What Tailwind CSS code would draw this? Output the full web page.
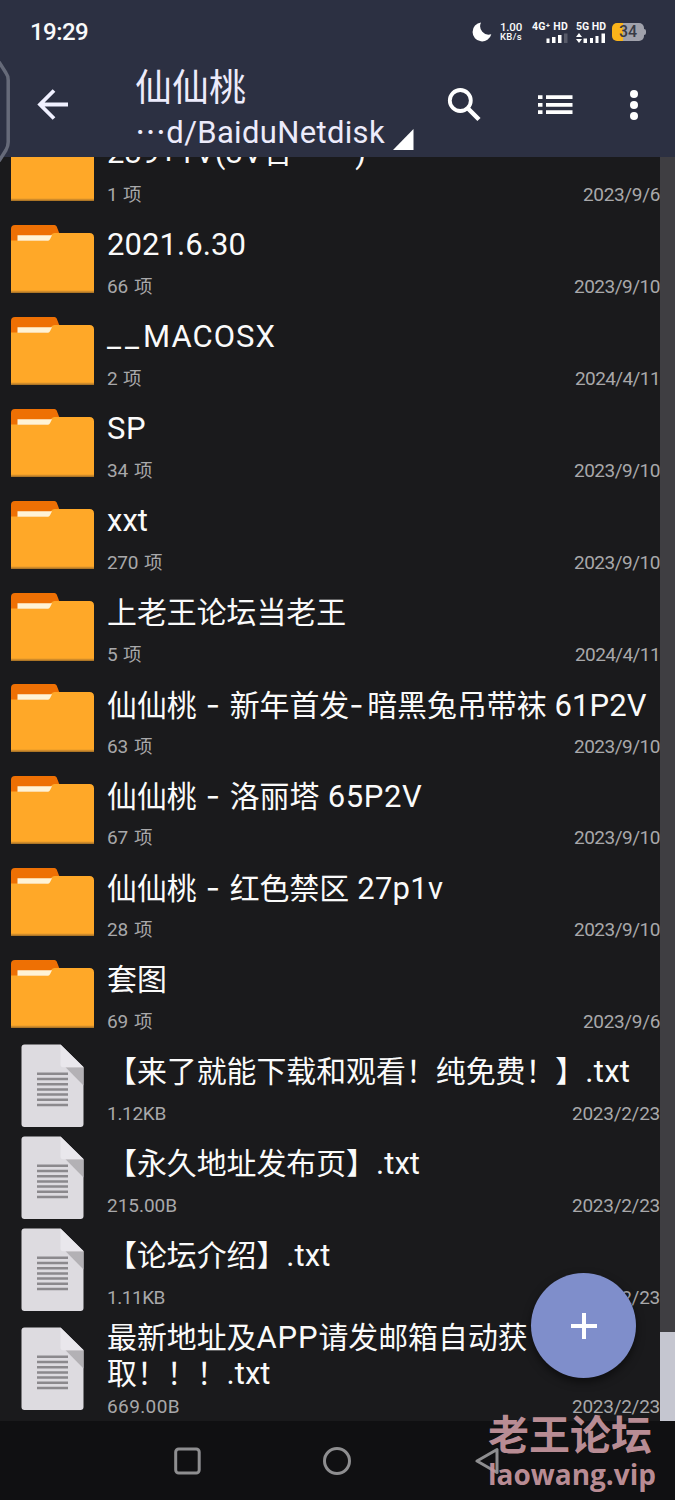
<!DOCTYPE html>
<html lang="zh-CN">
<head>
<meta charset="utf-8">
<title>文件管理器</title>
<script src="https://cdn.jsdelivr.net/npm/@tailwindcss/browser@4"></script>
</head>
<body class="bg-[#1a1a1c]">
<svg class="hidden">
  <symbol id="folder" viewBox="0 0 84 84">
    <path d="M0 32V12Q0 8 4 8H43.500Q45 8 45.700 9.500L49 18V32Z" fill="#ee7004"/>
    <path d="M0 23.500H34Q37.500 23.500 39 20.500L40.500 17.500Q41.500 16 43.500 16H78.500Q83 16 83 20.500V75.500H0Z" fill="#ffa828"/>
    <path d="M6.500 18.300H41L39 22.200Q38.200 23.800 36.500 23.800H6.500Z" fill="#fff3d6"/>
    <path d="M0 73.800H83V75.500H0Z" fill="#cf8b2b"/>
  </symbol>
  <symbol id="doc" viewBox="0 0 84 84">
    <path d="M10.500 3.500Q10.500 .5 13.500 .5H49.500L72.500 23V80Q72.500 83 69.500 83H13.500Q10.500 83 10.500 80Z" fill="#dddbe0"/>
    <path d="M54.500 23.200H72.500V41.500Z" fill="#b3b1b5"/>
    <path d="M49.500 .5L72.500 23.200H52Q49.500 23.200 49.500 20.500Z" fill="#e9e7ec"/>
    <path d="M26 29.800H57M26 35H57M26 40.200H57M26 45.400H57M26 50.600H57M26 55.800H57M26 61H57" stroke="#8b898d" stroke-width="2.500"/>
  </symbol>
</svg>
<div class="relative flex h-[1500px] w-[675px] flex-col overflow-hidden bg-[#1a1a1c] font-['Roboto','Noto_Sans_CJK_SC',sans-serif] text-[#fafafa]">
  <header class="relative flex h-[157px] shrink-0 flex-col bg-[#2c3042]">
    <div class="flex h-[64px] items-center pl-[30px] pr-[29px]">
      <span class="grow text-[24px] font-medium leading-none"><span class="fit whitespace-nowrap" data-w="58">19:29</span></span>
      <svg class="h-[20px] w-[20px]" viewBox="0 0 20 20"><path d="M9 .5A9.500 9.500 0 1 0 19.300 12.200A8.500 8.500 0 0 1 9 .5Z" fill="#fff"/></svg>
      <div class="ml-[7px] flex w-[24px] flex-col items-center text-[11.500px] font-medium leading-[10.500px]">
        <span class="fit whitespace-nowrap" data-w="22">1.00</span><span class="fit whitespace-nowrap text-[9.500px]" data-w="22">KB/s</span>
      </div>
      <div class="ml-[9px] flex w-[36px] flex-col items-end gap-[2px] text-[10.500px] font-bold leading-[9px]">
        <span class="fit whitespace-nowrap" data-w="36">4G⁺ HD</span>
        <svg class="h-[10px] w-[23px]" viewBox="0 0 23 10"><path d="M1.500 5.500h3V10h-3zM7 4h3.500v6H7zM13 2h3.500v8H13z" fill="#fff"/><path d="M19 .5h3.500V10H19z" fill="#585b69"/></svg>
      </div>
      <div class="ml-[7px] flex w-[31px] flex-col items-end gap-[2px] text-[10.500px] font-bold leading-[9px]">
        <span class="fit whitespace-nowrap" data-w="30">5G HD</span>
        <svg class="h-[10px] w-[30px]" viewBox="0 0 30 10"><path d="M3 0L6 4H0ZM3 10L0 6H6ZM7.500 5.500h3.500V10H7.500zM14 5h3v5h-3zM19.500 3h3v7h-3zM25.500 .5H29V10h-3.500z" fill="#fff"/></svg>
      </div>
      <div class="ml-[6px] flex items-center">
        <div class="flex h-[18px] w-[32px] items-center justify-center rounded-[5px] bg-linear-to-r from-[#fbb41a] from-35% to-[#a0a1ab] to-35% text-[16px] font-medium leading-none text-[#383a44]">34</div>
        <div class="h-[6px] w-[2px] rounded-r-sm bg-[#a0a1ab]"></div>
      </div>
    </div>
    <div class="flex h-[93px]">
      <svg class="ml-[36px] mt-[25px] h-[31px] w-[33px] shrink-0" viewBox="0 0 33 31" fill="none" stroke="#f0f0ff" stroke-width="3.800"><path d="M18 1.500L4 15.500L18 29.500M3.500 15.500H32"/></svg>
      <div class="ml-[66px] flex w-[281px] shrink-0 flex-col text-[#ecebfb]">
        <div class="mt-[4px] h-[42px] text-[37px] leading-[42px] whitespace-nowrap">仙仙桃</div>
        <div class="flex h-[46px] text-[31px] leading-[46px]"><span class="fit whitespace-nowrap" data-w="250">⋯d/BaiduNetdisk</span>
          <svg class="ml-[8px] mt-[19px] -mb-[4px] h-[21px] w-[21px] shrink-0" viewBox="0 0 21 21"><path d="M0 21L20.500 0V21Z" fill="#fff"/></svg>
        </div>
      </div>
      <svg class="ml-[31px] mt-[24px] h-[34px] w-[34px] shrink-0" viewBox="0 0 34 34" fill="none" stroke="#fff"><circle cx="13.300" cy="12.500" r="10.500" stroke-width="3.800"/><path d="M20.500 20L32 31.500" stroke-width="4.500"/></svg>
      <svg class="ml-[57px] mt-[31px] h-[20px] w-[35px] shrink-0" viewBox="0 0 35 20" stroke="#fff" stroke-width="3.700"><path d="M0 2.200H4.500M8 2.200H34.500M0 9.800H4.500M8 9.800H34.500M0 17.200H4.500M8 17.200H34.500"/></svg>
      <svg class="ml-[56px] mt-[25px] h-[32px] w-[10px] shrink-0" viewBox="0 0 10 32" fill="#fff"><circle cx="5" cy="5" r="4"/><circle cx="5" cy="16" r="4"/><circle cx="5" cy="27" r="4"/></svg>
    </div>
  </header>
  <div class="flex h-[1264px] shrink-0 overflow-hidden">
    <main id="list" class="-mt-[35.800px] w-[660px] shrink-0"></main>
    <div class="flex w-[15px] flex-col justify-end bg-[#3f3e42]"><div class="h-[89px] bg-[#c5c6d0]"></div></div>
  </div>
  <nav class="flex h-[79px] shrink-0 items-center bg-[#101012]">
    <svg class="ml-[174px] h-[28px] w-[27px]" viewBox="0 0 27 28" fill="none" stroke="#8e8e90" stroke-width="3"><rect x="1.700" y="2" width="23.500" height="24" rx="3"/></svg>
    <svg class="ml-[122px] h-[28px] w-[28px]" viewBox="0 0 28 28" fill="none" stroke="#8e8e90" stroke-width="3"><circle cx="14" cy="14" r="12.500"/></svg>
    <svg class="ml-[124px] h-[28px] w-[25px]" viewBox="0 0 25 28" fill="none" stroke="#8e8e90" stroke-width="3" stroke-linejoin="round"><path d="M2 14L22 2.500V25.500Z"/></svg>
  </nav>
  <svg class="absolute left-0 top-[60px] h-[106px] w-[12px]" viewBox="0 0 12 106" fill="none" stroke="#666a79" stroke-width="3.500"><path d="M-1 2L6 13Q8.200 16 8.200 20V82Q8.200 86 6 90L-1 101"/></svg>
  <div class="absolute left-[531px] top-[1273px] flex h-[105px] w-[105px] items-center justify-center rounded-full bg-[#7f8ecb] shadow-[0_4px_8px_rgba(0,0,0,0.5)]">
    <svg class="h-[26px] w-[26px]" viewBox="0 0 26 26" stroke="#fff" stroke-width="4"><path d="M13 0V26M0 13H26"/></svg>
  </div>
  <div class="absolute left-[488px] top-[1407px] flex flex-col font-bold text-[#c4959d]/95">
    <span class="h-[50px] font-['Noto_Sans_CJK_SC',sans-serif] text-[41px] leading-[50px] font-bold whitespace-nowrap">老王论坛</span>
    <span class="h-[34px] font-['Open_Sans',sans-serif] text-[28px] leading-[34px]"><span class="fit whitespace-nowrap" data-w="168">laowang.vip</span></span>
  </div>
</div>
<script>
// Each title is a list of runs: a string is set as is, [text, width] is tracked to that width.
const rows = [
  ['folder', [['239+1V(3V', 156], '合', ['    )', 81]], [['1', 10], [' ', 6], '项'], '2023/9/6', 77],
  ['folder', [['2021.6.30', 139]], [['66', 21], [' ', 6], '项'], '2023/9/10', 86],
  ['folder', [['__', 36], ['MACOSX', 133]], [['2', 10], [' ', 6], '项'], '2024/4/11', 85],
  ['folder', [['SP', 39]], [['34', 21], [' ', 6], '项'], '2023/9/10', 86],
  ['folder', [['xxt', 41]], [['270', 31], [' ', 6], '项'], '2023/9/10', 86],
  ['folder', ['上老王论坛当老王'], [['5', 10], [' ', 6], '项'], '2024/4/11', 85],
  ['folder', ['仙仙桃', [' - ', 33], '新年首发', ['-', 18], '暗黑兔吊带袜', [' 61P2V', 100]], [['63', 21], [' ', 6], '项'], '2023/9/10', 86],
  ['folder', ['仙仙桃', [' - ', 33], '洛丽塔', [' 65P2V', 103]], [['67', 21], [' ', 6], '项'], '2023/9/10', 86],
  ['folder', ['仙仙桃', [' - ', 33], '红色禁区', [' 27p1v', 94]], [['28', 21], [' ', 6], '项'], '2023/9/10', 86],
  ['folder', ['套图'], [['69', 21], [' ', 6], '项'], '2023/9/6', 77],
  ['doc', ['【来了就能下载和观看！纯免费！】', ['.txt', 45]], [['1.12KB', 59]], '2023/2/23', 88],
  ['doc', ['【永久地址发布页】', ['.txt', 44]], [['215.00B', 70]], '2023/2/23', 88],
  ['doc', ['【论坛介绍】', ['.txt', 44]], [['1.11KB', 58]], '2023/2/23', 88],
  ['doc', ['最新地址及', ['APP', 62], '请发邮箱自动获', '\n', '取！！！', ['.txt', 44]], [['669.00B', 73]], '2023/2/23', 88],
];
const run = size => r => {
  if (r === '\n') return '<br>';
  if (!Array.isArray(r)) return `<span>${r}</span>`;
  const face = r[0].trim() === '-' ? "font-['Inter']" : '';
  return `<span class="fit whitespace-pre ${size} ${face}" data-w="${r[1]}">${r[0]}</span>`;
};
document.getElementById('list').innerHTML = rows.map(([icon, title, sub, date, dw], i) => {
  const last = i === rows.length - 1;
  return `<div class="flex items-center pl-[11px] ${last ? 'h-[106px]' : 'h-[91.900px]'}">
    <svg class="size-[84px] shrink-0"><use href="#${icon}"/></svg>
    <div class="ml-[12px] flex h-full min-w-0 grow flex-col ${last ? 'pt-[4px]' : 'pt-[11px]'}">
      <div class="text-[29.900px] whitespace-nowrap ${last ? 'h-[75px] leading-[36px]' : 'h-[51px] leading-[42px]'}">${title.map(run('text-[31px]')).join('')}</div>
      <div class="flex justify-between text-[18.500px] leading-[24px] text-[#a8a8aa]"><span class="whitespace-pre">${sub.map(run('text-[19px]')).join('')}</span><span class="fit text-[19px] whitespace-nowrap" data-w="${dw}">${date}</span></div>
    </div>
  </div>`;
}).join('');
function fit() {
  document.querySelectorAll('.fit').forEach(e => {
    e.style.letterSpacing = '0px';
    const r = document.createRange();
    r.selectNodeContents(e);
    e.style.letterSpacing = (e.dataset.w - r.getBoundingClientRect().width) / e.textContent.length + 'px';
  });
}
fit();
addEventListener('load', () => { fit(); requestAnimationFrame(fit); setTimeout(fit, 60); });
</script>
</body>
</html>
